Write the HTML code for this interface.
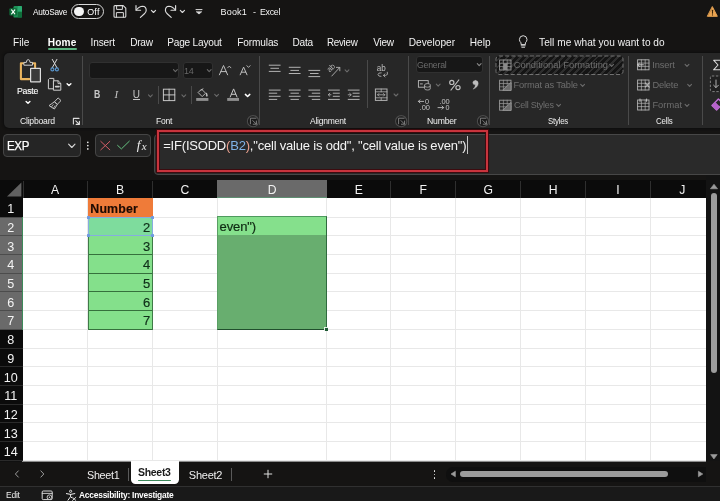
<!DOCTYPE html>
<html lang="en"><head><meta charset="utf-8"><title>Book1 - Excel</title>
<style>
html,body{margin:0;padding:0;}
body{width:720px;height:501px;overflow:hidden;background:#151413;font-family:"Liberation Sans",sans-serif;position:relative;}
#app{position:absolute;left:0;top:0;width:720px;height:501px;overflow:hidden;will-change:transform;}
#app div,#app span,#app svg{position:absolute;display:block;}
#app span{white-space:pre;}
</style></head>
<body>
<div id="app">
<div style="left:3.5px;top:52.5px;width:720px;height:75px;background:#272727;border-radius:5px 0 0 5px;box-shadow:0 0 2px 1px #0e0e0e;"></div>
<div style="left:71px;top:4px;width:32.5px;height:14.5px;border:1.1px solid #d8d8d8;border-radius:8px;box-sizing:border-box;"></div>
<div style="left:74.3px;top:6.6px;width:9.6px;height:9.6px;border-radius:50%;background:#f4f4f4;"></div>
<div style="left:48px;top:48px;width:28.5px;height:1.6px;background:#5cb37f;border-radius:1px;"></div>
<div style="left:81.5px;top:56px;width:1px;height:68.5px;background:#4a4a4a;"></div>
<div style="left:259.0px;top:56px;width:1px;height:68.5px;background:#4a4a4a;"></div>
<div style="left:367.0px;top:60px;width:1px;height:47.5px;background:#4a4a4a;"></div>
<div style="left:408.2px;top:56px;width:1px;height:68.5px;background:#4a4a4a;"></div>
<div style="left:489.0px;top:56px;width:1px;height:68.5px;background:#4a4a4a;"></div>
<div style="left:628.2px;top:56px;width:1px;height:68.5px;background:#4a4a4a;"></div>
<div style="left:702.0px;top:56px;width:1px;height:68.5px;background:#4a4a4a;"></div>
<div style="left:158.0px;top:86px;width:1px;height:18px;background:#4a4a4a;"></div>
<div style="left:191.0px;top:86px;width:1px;height:18px;background:#4a4a4a;"></div>
<div style="left:88.7px;top:61.7px;width:90px;height:17.3px;background:#171717;border-radius:3px;border:1px solid #303030;box-sizing:border-box;"></div>
<div style="left:182.5px;top:61.7px;width:30.5px;height:17.3px;background:#171717;border-radius:3px;border:1px solid #303030;box-sizing:border-box;"></div>
<div style="left:415.7px;top:56px;width:67.5px;height:17.3px;background:#171717;border-radius:3px;border:1px solid #303030;box-sizing:border-box;"></div>
<div style="left:132.5px;top:99.2px;width:7px;height:0.9px;background:#c4c4c4;"></div>
<div style="left:3.2px;top:134px;width:77.6px;height:22.5px;background:#252525;border:1px solid #454545;border-radius:4px;box-sizing:border-box;"></div>
<div style="left:95.4px;top:134px;width:56px;height:22.5px;background:#252525;border:1px solid #454545;border-radius:4px;box-sizing:border-box;"></div>
<div style="left:154px;top:133.5px;width:580px;height:41.5px;background:#2a2a2a;border:1px solid #474747;border-radius:4px;box-sizing:border-box;"></div>
<div style="left:157px;top:129.8px;width:331px;height:41.8px;border:2.9px solid #c9343d;box-sizing:border-box;box-shadow:0 0 0.6px 1px rgba(62,8,12,0.9), inset 0 0 0.6px 1px rgba(62,8,12,0.9);"></div>
<div style="left:0px;top:175px;width:720px;height:5px;background:#151413;"></div>
<div style="left:0px;top:180px;width:706px;height:18px;background:#0b0b0b;"></div>
<div style="left:0px;top:198px;width:23px;height:263px;background:#0b0b0b;"></div>
<div style="left:23px;top:198px;width:683px;height:263px;background:#ffffff;"></div>
<div style="left:87px;top:198px;width:1px;height:263px;background:#e8e8e8;"></div>
<div style="left:152px;top:198px;width:1px;height:263px;background:#e8e8e8;"></div>
<div style="left:217px;top:198px;width:1px;height:263px;background:#e8e8e8;"></div>
<div style="left:326px;top:198px;width:1px;height:263px;background:#e8e8e8;"></div>
<div style="left:390px;top:198px;width:1px;height:263px;background:#e8e8e8;"></div>
<div style="left:455px;top:198px;width:1px;height:263px;background:#e8e8e8;"></div>
<div style="left:520px;top:198px;width:1px;height:263px;background:#e8e8e8;"></div>
<div style="left:585px;top:198px;width:1px;height:263px;background:#e8e8e8;"></div>
<div style="left:650px;top:198px;width:1px;height:263px;background:#e8e8e8;"></div>
<div style="left:23px;top:217px;width:683px;height:1px;background:#e8e8e8;"></div>
<div style="left:23px;top:235px;width:683px;height:1px;background:#e8e8e8;"></div>
<div style="left:23px;top:254px;width:683px;height:1px;background:#e8e8e8;"></div>
<div style="left:23px;top:273px;width:683px;height:1px;background:#e8e8e8;"></div>
<div style="left:23px;top:291px;width:683px;height:1px;background:#e8e8e8;"></div>
<div style="left:23px;top:310px;width:683px;height:1px;background:#e8e8e8;"></div>
<div style="left:23px;top:329px;width:683px;height:1px;background:#e8e8e8;"></div>
<div style="left:23px;top:348px;width:683px;height:1px;background:#e8e8e8;"></div>
<div style="left:23px;top:366px;width:683px;height:1px;background:#e8e8e8;"></div>
<div style="left:23px;top:385px;width:683px;height:1px;background:#e8e8e8;"></div>
<div style="left:23px;top:404px;width:683px;height:1px;background:#e8e8e8;"></div>
<div style="left:23px;top:422px;width:683px;height:1px;background:#e8e8e8;"></div>
<div style="left:23px;top:441px;width:683px;height:1px;background:#e8e8e8;"></div>
<div style="left:23px;top:460px;width:683px;height:1px;background:#e8e8e8;"></div>
<div style="left:23px;top:181px;width:1px;height:17px;background:#2f2f2f;"></div>
<div style="left:87px;top:181px;width:1px;height:17px;background:#2f2f2f;"></div>
<div style="left:152px;top:181px;width:1px;height:17px;background:#2f2f2f;"></div>
<div style="left:217px;top:181px;width:1px;height:17px;background:#2f2f2f;"></div>
<div style="left:326px;top:181px;width:1px;height:17px;background:#2f2f2f;"></div>
<div style="left:390px;top:181px;width:1px;height:17px;background:#2f2f2f;"></div>
<div style="left:455px;top:181px;width:1px;height:17px;background:#2f2f2f;"></div>
<div style="left:520px;top:181px;width:1px;height:17px;background:#2f2f2f;"></div>
<div style="left:585px;top:181px;width:1px;height:17px;background:#2f2f2f;"></div>
<div style="left:650px;top:181px;width:1px;height:17px;background:#2f2f2f;"></div>
<div style="left:217px;top:180px;width:110px;height:18px;background:#6a6a6a;"></div>
<div style="left:217px;top:197px;width:110px;height:1px;background:#5f8f72;"></div>
<div style="left:0px;top:217px;width:23px;height:113px;background:#6a6a6a;"></div>
<div style="left:0px;top:217px;width:23px;height:1px;background:#4c4c4c;"></div>
<div style="left:0px;top:235px;width:23px;height:1px;background:#4c4c4c;"></div>
<div style="left:0px;top:254px;width:23px;height:1px;background:#4c4c4c;"></div>
<div style="left:0px;top:273px;width:23px;height:1px;background:#4c4c4c;"></div>
<div style="left:0px;top:291px;width:23px;height:1px;background:#4c4c4c;"></div>
<div style="left:0px;top:310px;width:23px;height:1px;background:#4c4c4c;"></div>
<div style="left:0px;top:329px;width:23px;height:1px;background:#4c4c4c;"></div>
<div style="left:0px;top:348px;width:23px;height:1px;background:#2a2a2a;"></div>
<div style="left:0px;top:366px;width:23px;height:1px;background:#2a2a2a;"></div>
<div style="left:0px;top:385px;width:23px;height:1px;background:#2a2a2a;"></div>
<div style="left:0px;top:404px;width:23px;height:1px;background:#2a2a2a;"></div>
<div style="left:0px;top:422px;width:23px;height:1px;background:#2a2a2a;"></div>
<div style="left:0px;top:441px;width:23px;height:1px;background:#2a2a2a;"></div>
<div style="left:0px;top:460px;width:23px;height:1px;background:#2a2a2a;"></div>
<div style="left:22px;top:217px;width:1px;height:113px;background:#3d8a5a;"></div>
<svg style="left:0px;top:180px;" width="23" height="18" viewBox="0 0 23 18"><path d="M21.4 2.4V16.4H7Z" fill="#616161"/></svg>
<div style="left:88px;top:198px;width:65px;height:19px;background:#ef7b39;"></div>
<div style="left:88px;top:217px;width:65px;height:113px;background:#84e08b;"></div>
<div style="left:88px;top:235px;width:65px;height:1px;background:#35703c;"></div>
<div style="left:88px;top:254px;width:65px;height:1px;background:#35703c;"></div>
<div style="left:88px;top:273px;width:65px;height:1px;background:#35703c;"></div>
<div style="left:88px;top:291px;width:65px;height:1px;background:#35703c;"></div>
<div style="left:88px;top:310px;width:65px;height:1px;background:#35703c;"></div>
<div style="left:88px;top:329px;width:65px;height:1px;background:#35703c;"></div>
<div style="left:88px;top:217px;width:1px;height:113px;background:#3f7a47;"></div>
<div style="left:152px;top:217px;width:1px;height:113px;background:#3f7a47;"></div>
<div style="left:88px;top:217px;width:65px;height:18px;background:#7edc9d;"></div>
<div style="left:87.7px;top:216.7px;width:65.6px;height:19.6px;border:1.4px solid #86addf;box-sizing:border-box;"></div>
<div style="left:86.80000000000001px;top:215.9px;width:3.2px;height:3.2px;background:#6f9be0;border-radius:0.6px;"></div>
<div style="left:151.0px;top:215.9px;width:3.2px;height:3.2px;background:#6f9be0;border-radius:0.6px;"></div>
<div style="left:86.80000000000001px;top:233.9px;width:3.2px;height:3.2px;background:#6f9be0;border-radius:0.6px;"></div>
<div style="left:151.0px;top:233.9px;width:3.2px;height:3.2px;background:#6f9be0;border-radius:0.6px;"></div>
<div style="left:217px;top:217px;width:110px;height:113px;background:#68ae6f;"></div>
<div style="left:217px;top:217px;width:110px;height:18px;background:#85e08c;"></div>
<div style="left:217px;top:216px;width:110px;height:114px;border-top:1px solid #4e9a5e;border-left:1px solid #5a9f64;border-right:1px solid #2f6a3e;border-bottom:1px solid #214f2d;box-sizing:border-box;"></div>
<div style="left:324px;top:327px;width:4px;height:4px;background:#e8f3ea;"></div>
<div style="left:325px;top:328px;width:3px;height:3px;background:#1f5a35;"></div>
<div style="left:706px;top:175px;width:14px;height:287px;background:#131313;"></div>
<svg style="left:706px;top:180px;" width="14" height="14" viewBox="0 0 14 14"><path d="M8 4.2L11.6 8.8H4.4Z" fill="#9c9c9c" stroke="#9c9c9c" stroke-width="0.6" stroke-linejoin="round"/></svg>
<div style="left:711px;top:192.8px;width:6.2px;height:180.4px;background:#9c9c9c;border-radius:3.1px;"></div>
<svg style="left:706px;top:450px;" width="14" height="12" viewBox="0 0 14 12"><path d="M4.6 4.6H11.2L7.9 9Z" fill="#9c9c9c" stroke="#9c9c9c" stroke-width="0.6" stroke-linejoin="round"/></svg>
<div style="left:0px;top:461px;width:720px;height:25px;background:#151413;"></div>
<div style="left:0px;top:461px;width:706px;height:1px;background:#8c8c8c;"></div>
<div style="left:0px;top:461px;width:22px;height:1px;background:#101010;"></div>
<div style="left:0px;top:486px;width:720px;height:15px;background:#191919;"></div>
<div style="left:0px;top:485.6px;width:720px;height:0.8px;background:#303030;"></div>
<div style="left:131px;top:461px;width:47.5px;height:22.5px;background:#ffffff;border-radius:0 0 4.5px 4.5px;"></div>
<div style="left:138px;top:479.5px;width:32.5px;height:1.5px;background:#3f8a5c;border-radius:1px;"></div>
<div style="left:231.3px;top:467.5px;width:0.9px;height:13.5px;background:#5a5a5a;"></div>
<div style="left:128.3px;top:467.5px;width:0.9px;height:13.5px;background:#5a5a5a;"></div>
<svg style="left:262px;top:468px;" width="12" height="12" viewBox="0 0 12 12"><path d="M6 1.8V10.2M1.8 6H10.2" stroke="#e0e0e0" stroke-width="1" fill="none"/></svg>
<svg style="left:12px;top:468px;" width="10" height="12" viewBox="0 0 10 12"><path d="M6.6 2.6L3.4 6L6.6 9.4" stroke="#9a9a9a" stroke-width="1" fill="none"/></svg>
<svg style="left:37px;top:468px;" width="10" height="12" viewBox="0 0 10 12"><path d="M3.6 2.6L6.8 6L3.6 9.4" stroke="#9a9a9a" stroke-width="1" fill="none"/></svg>
<div style="left:433.6px;top:470.3px;width:1.8px;height:1.8px;background:#f0f0f0;border-radius:50%;"></div>
<div style="left:433.6px;top:473.70000000000005px;width:1.8px;height:1.8px;background:#f0f0f0;border-radius:50%;"></div>
<div style="left:433.6px;top:477.1px;width:1.8px;height:1.8px;background:#f0f0f0;border-radius:50%;"></div>
<div style="left:446px;top:466.5px;width:260px;height:15px;background:#0f0f0f;border-radius:7px 0 0 7px;"></div>
<svg style="left:448px;top:468px;" width="10" height="12" viewBox="0 0 10 12"><path d="M7.4 3.2V8.8L3 6Z" fill="#9c9c9c" stroke="#9c9c9c" stroke-width="0.6" stroke-linejoin="round"/></svg>
<div style="left:460px;top:470.6px;width:208px;height:6.2px;background:#9c9c9c;border-radius:3.1px;"></div>
<svg style="left:695px;top:468px;" width="10" height="12" viewBox="0 0 10 12"><path d="M3.4 3.2V8.8L7.8 6Z" fill="#9c9c9c" stroke="#9c9c9c" stroke-width="0.6" stroke-linejoin="round"/></svg>
<div style="left:496px;top:55.5px;width:127px;height:18.5px;border-radius:3px;box-sizing:border-box;background:repeating-linear-gradient(135deg,#141414 0 2.9px,#2e2e2e 2.9px 4.9px);"></div>
<svg style="left:495px;top:54.5px" width="129" height="20.5" viewBox="0 0 129 20.5"><rect x="1" y="1" width="127" height="18.5" rx="3" fill="none" stroke="#858585" stroke-width="0.8" stroke-dasharray="4 2.2"/></svg>
<svg style="left:0;top:0" width="720" height="501" viewBox="0 0 720 501"><rect x="13.5" y="6" width="8.5" height="11.6" rx="1.2" fill="#1d9158" stroke="none" stroke-width="0" /><rect x="17.7" y="6" width="4.3" height="5.8" rx="1" fill="#2bab70" stroke="none" stroke-width="0" /><rect x="17.7" y="11.8" width="4.3" height="5.8" rx="1" fill="#0f6e3a" stroke="none" stroke-width="0" /><rect x="9.4" y="8.2" width="7.6" height="7.4" rx="1" fill="#0f6e3a" stroke="none" stroke-width="0" /><path d="M11.6 9.9L14.8 13.9M14.8 9.9L11.6 13.9" fill="none" stroke="#ffffff" stroke-width="1.1" stroke-linecap="round" stroke-linejoin="round" /><path d="M114 6.6Q114 5.6 115 5.6H123.2L125.8 8.2V16.3Q125.8 17.3 124.8 17.3H115Q114 17.3 114 16.3Z" fill="none" stroke="#dcdcdc" stroke-width="1.1" stroke-linecap="round" stroke-linejoin="round" /><path d="M116.6 5.8V9.4H122.4V5.8" fill="none" stroke="#dcdcdc" stroke-width="1" stroke-linecap="round" stroke-linejoin="round" /><path d="M116.4 17.2V12.6H123.4V17.2" fill="none" stroke="#dcdcdc" stroke-width="1" stroke-linecap="round" stroke-linejoin="round" /><path d="M136 5.6V10.2H140.6" fill="none" stroke="#dcdcdc" stroke-width="1.15" stroke-linecap="round" stroke-linejoin="round" /><path d="M136.3 10Q139.2 6.2 142.6 6.2Q146.2 6.4 146.2 10.2Q146.2 12.2 144.4 13.8L140.4 17.4" fill="none" stroke="#dcdcdc" stroke-width="1.15" stroke-linecap="round" stroke-linejoin="round" /><path d="M151.40 10.30L153.50 12.50L155.60 10.30" fill="none" stroke="#dcdcdc" stroke-width="1.1" stroke-linecap="round" stroke-linejoin="round" /><path d="M175.6 5.6V10.2H171" fill="none" stroke="#dcdcdc" stroke-width="1.15" stroke-linecap="round" stroke-linejoin="round" /><path d="M175.3 10Q172.4 6.2 169 6.2Q165.4 6.4 165.4 10.2Q165.4 12.2 167.2 13.8L171.2 17.4" fill="none" stroke="#dcdcdc" stroke-width="1.15" stroke-linecap="round" stroke-linejoin="round" /><path d="M180.30 10.30L182.40 12.50L184.50 10.30" fill="none" stroke="#dcdcdc" stroke-width="1.1" stroke-linecap="round" stroke-linejoin="round" /><path d="M196 9.6H202" fill="none" stroke="#dcdcdc" stroke-width="1" stroke-linecap="round" stroke-linejoin="round" /><path d="M196.6 12L199 14L201.4 12Z" fill="#dcdcdc" stroke="#dcdcdc" stroke-width="0.8" stroke-linecap="round" stroke-linejoin="round" /><path d="M712.5 6.9L717.3 16.3H707.7Z" fill="#eaa452" stroke="#eaa452" stroke-width="1" stroke-linecap="round" stroke-linejoin="round" /><path d="M712.5 10.2V13.2" fill="none" stroke="#3a2608" stroke-width="1.1" stroke-linecap="round" stroke-linejoin="round" /><circle cx="712.5" cy="14.9" r="0.6" fill="#3a2608" stroke="none" stroke-width="0"/><path d="M521 44.2V42.8Q519.4 41.4 519.4 39.4Q519.6 35.8 523.2 35.7Q526.8 35.8 527 39.4Q527 41.4 525.4 42.8V44.2Z" fill="none" stroke="#dcdcdc" stroke-width="1" stroke-linecap="round" stroke-linejoin="round" /><path d="M521.2 45.8H525.2M521.8 47.3H524.6" fill="none" stroke="#dcdcdc" stroke-width="0.9" stroke-linecap="round" stroke-linejoin="round" /><path d="M23.6 63.2H20.9V79.1H29.6" fill="none" stroke="#eab55f" stroke-width="2.1" stroke-linecap="round" stroke-linejoin="round" stroke-linecap="butt" stroke-linejoin="miter"/><path d="M32.6 63.2H35.1V67.2" fill="none" stroke="#eab55f" stroke-width="2.1" stroke-linecap="round" stroke-linejoin="round" stroke-linecap="butt" stroke-linejoin="miter"/><path d="M23.9 64.8V62.4H26.4Q26.4 59.6 28.2 59.6Q30 59.6 30 62.4H32.5V64.8Z" fill="#2a2a2a" stroke="#cfcfcf" stroke-width="1" stroke-linecap="round" stroke-linejoin="round" /><rect x="30.6" y="68.4" width="9.8" height="13.4" rx="0.4" fill="#3a3a3a" stroke="#dedede" stroke-width="1.2" /><path d="M26.1 101.5L28 103.3L29.9 101.5" fill="none" stroke="#ffffff" stroke-width="1.4" stroke-linecap="round" stroke-linejoin="round" /><path d="M52.3 59.4L56.9 67.6M56.9 59.4L52.3 67.6" fill="none" stroke="#dcdcdc" stroke-width="1" stroke-linecap="round" stroke-linejoin="round" /><circle cx="52.4" cy="69.4" r="1.5" fill="none" stroke="#5b9bd5" stroke-width="1.1"/><circle cx="56.9" cy="69.4" r="1.5" fill="none" stroke="#5b9bd5" stroke-width="1.1"/><path d="M50 78.4H53.8V88.8H48.4V80Z" fill="none" stroke="#d0d0d0" stroke-width="1" stroke-linecap="round" stroke-linejoin="round" stroke-linejoin="miter"/><path d="M53.8 80.8H58.2L60.8 83.4V90.2H53.8Z" fill="#272727" stroke="#d0d0d0" stroke-width="1" stroke-linecap="round" stroke-linejoin="round" stroke-linejoin="miter"/><path d="M58 81V83.6H60.6" fill="none" stroke="#d0d0d0" stroke-width="0.9" stroke-linecap="round" stroke-linejoin="round" /><path d="M55.6 86.6H59" fill="none" stroke="#d0d0d0" stroke-width="1.6" stroke-linecap="round" stroke-linejoin="round" stroke-linecap="butt"/><path d="M67.1 83.8L69 85.6L70.9 83.8" fill="none" stroke="#ffffff" stroke-width="1.4" stroke-linecap="round" stroke-linejoin="round" /><path d="M58.4 98.2L61 100.6L57.2 104.4L54.8 102Z" fill="none" stroke="#d0d0d0" stroke-width="0.9" stroke-linecap="round" stroke-linejoin="round" /><path d="M54.8 102L57.2 104.6L54.4 109L49.4 105.8Z" fill="none" stroke="#d0d0d0" stroke-width="0.9" stroke-linecap="round" stroke-linejoin="round" /><path d="M51.4 107L53.2 104.6M53.4 108.2L55 105.8" fill="none" stroke="#d0d0d0" stroke-width="0.7" stroke-linecap="round" stroke-linejoin="round" /><path d="M73.4 124.0V118.4H79.0" fill="none" stroke="#dcdcdc" stroke-width="1.1" stroke-linecap="round" stroke-linejoin="round" /><path d="M75.80000000000001 120.80000000000001L79.4 124.4M79.4 121.2V124.4H76.2" fill="none" stroke="#dcdcdc" stroke-width="1.1" stroke-linecap="round" stroke-linejoin="round" /><circle cx="253.0" cy="121.2" r="5.6" fill="#1a1a1a" stroke="#4c4c4c" stroke-width="1.1"/><path d="M250.4 123.8V118.2H256.0" fill="none" stroke="#8a8a8a" stroke-width="0.9" stroke-linecap="round" stroke-linejoin="round" /><path d="M252.8 120.60000000000001L256.4 124.2M256.4 121.0V124.2H253.20000000000002" fill="none" stroke="#8a8a8a" stroke-width="0.9" stroke-linecap="round" stroke-linejoin="round" /><circle cx="401.20000000000005" cy="121.2" r="5.6" fill="#1a1a1a" stroke="#4c4c4c" stroke-width="1.1"/><path d="M398.6 123.8V118.2H404.20000000000005" fill="none" stroke="#8a8a8a" stroke-width="0.9" stroke-linecap="round" stroke-linejoin="round" /><path d="M401.0 120.60000000000001L404.6 124.2M404.6 121.0V124.2H401.40000000000003" fill="none" stroke="#8a8a8a" stroke-width="0.9" stroke-linecap="round" stroke-linejoin="round" /><circle cx="483.0" cy="121.2" r="5.6" fill="#1a1a1a" stroke="#4c4c4c" stroke-width="1.1"/><path d="M480.4 123.8V118.2H486.0" fill="none" stroke="#8a8a8a" stroke-width="0.9" stroke-linecap="round" stroke-linejoin="round" /><path d="M482.79999999999995 120.60000000000001L486.4 124.2M486.4 121.0V124.2H483.2" fill="none" stroke="#8a8a8a" stroke-width="0.9" stroke-linecap="round" stroke-linejoin="round" /><path d="M173.50 69.60L175.40 71.60L177.30 69.60" fill="none" stroke="#6a6a6a" stroke-width="1.1" stroke-linecap="round" stroke-linejoin="round" /><path d="M207.30 69.60L209.20 71.60L211.10 69.60" fill="none" stroke="#6a6a6a" stroke-width="1.1" stroke-linecap="round" stroke-linejoin="round" /><path d="M477.30 63.60L479.20 65.60L481.10 63.60" fill="none" stroke="#8a8a8a" stroke-width="1.1" stroke-linecap="round" stroke-linejoin="round" /><path d="M219.4 74.8L223.5 65.5L227.6 74.8M220.9 71.6H226.1" fill="none" stroke="#bdbdbd" stroke-width="1" stroke-linecap="round" stroke-linejoin="round" /><path d="M227.7 67.8L229.3 66.1L230.9 67.8" fill="none" stroke="#bdbdbd" stroke-width="0.9" stroke-linecap="round" stroke-linejoin="round" /><path d="M240.2 74.8L243.6 67.1L247 74.8M241.5 72.2H245.7" fill="none" stroke="#bdbdbd" stroke-width="1" stroke-linecap="round" stroke-linejoin="round" /><path d="M246.9 65.7L248.5 67.4L250.1 65.7" fill="none" stroke="#bdbdbd" stroke-width="0.9" stroke-linecap="round" stroke-linejoin="round" /><path d="M148.50 94.80L150.40 96.80L152.30 94.80" fill="none" stroke="#6a6a6a" stroke-width="1.1" stroke-linecap="round" stroke-linejoin="round" /><rect x="163.4" y="89.2" width="11.4" height="11.4" rx="0" fill="none" stroke="#c6c6c6" stroke-width="1" /><path d="M169.1 89.2V100.6M163.4 94.9H174.8" fill="none" stroke="#c6c6c6" stroke-width="1" stroke-linecap="round" stroke-linejoin="round" /><path d="M181.90 94.80L183.80 96.80L185.70 94.80" fill="none" stroke="#6a6a6a" stroke-width="1.1" stroke-linecap="round" stroke-linejoin="round" /><path d="M201.8 89.4L205.6 93.2L202.2 96.6L198.4 92.8Z" fill="none" stroke="#c6c6c6" stroke-width="0.9" stroke-linecap="round" stroke-linejoin="round" /><path d="M200.8 90.4L203 88.8" fill="none" stroke="#c6c6c6" stroke-width="0.9" stroke-linecap="round" stroke-linejoin="round" /><path d="M206.6 93.4Q207.9 95.4 206.9 96.4Q205.7 95.6 206.6 93.4Z" fill="#c6c6c6" stroke="#c6c6c6" stroke-width="0.8" stroke-linecap="round" stroke-linejoin="round" /><rect x="196.2" y="98" width="12.2" height="2.9" rx="0" fill="#8f8f8f" stroke="none" stroke-width="0" /><path d="M214.70 94.40L216.60 96.40L218.50 94.40" fill="none" stroke="#6a6a6a" stroke-width="1.1" stroke-linecap="round" stroke-linejoin="round" /><path d="M230.2 97L233.6 88.9L237 97M231.5 94.3H235.7" fill="none" stroke="#c6c6c6" stroke-width="1" stroke-linecap="round" stroke-linejoin="round" /><rect x="227.2" y="98" width="11.8" height="2.9" rx="0" fill="#8f8f8f" stroke="none" stroke-width="0" /><path d="M245.4 94.4L247.6 96.5L249.8 94.4" fill="none" stroke="#ffffff" stroke-width="1.5" stroke-linecap="round" stroke-linejoin="round" /><path d="M269.20 65.2H280.20" fill="none" stroke="#b2b2b2" stroke-width="1" stroke-linecap="round" stroke-linejoin="round" /><path d="M270.80 68.3H278.60" fill="none" stroke="#b2b2b2" stroke-width="1" stroke-linecap="round" stroke-linejoin="round" /><path d="M269.20 71.4H280.20" fill="none" stroke="#b2b2b2" stroke-width="1" stroke-linecap="round" stroke-linejoin="round" /><path d="M289.20 67.3H300.20" fill="none" stroke="#b2b2b2" stroke-width="1" stroke-linecap="round" stroke-linejoin="round" /><path d="M290.80 70.4H298.60" fill="none" stroke="#b2b2b2" stroke-width="1" stroke-linecap="round" stroke-linejoin="round" /><path d="M289.20 73.5H300.20" fill="none" stroke="#b2b2b2" stroke-width="1" stroke-linecap="round" stroke-linejoin="round" /><path d="M308.80 70.4H319.80" fill="none" stroke="#b2b2b2" stroke-width="1" stroke-linecap="round" stroke-linejoin="round" /><path d="M310.40 73.5H318.20" fill="none" stroke="#b2b2b2" stroke-width="1" stroke-linecap="round" stroke-linejoin="round" /><path d="M308.80 76.6H319.80" fill="none" stroke="#b2b2b2" stroke-width="1" stroke-linecap="round" stroke-linejoin="round" /><path d="M269.20 90.1H280.20" fill="none" stroke="#b2b2b2" stroke-width="1" stroke-linecap="round" stroke-linejoin="round" /><path d="M269.20 93.2H276.80" fill="none" stroke="#b2b2b2" stroke-width="1" stroke-linecap="round" stroke-linejoin="round" /><path d="M269.20 96.3H280.20" fill="none" stroke="#b2b2b2" stroke-width="1" stroke-linecap="round" stroke-linejoin="round" /><path d="M269.20 99.4H276.80" fill="none" stroke="#b2b2b2" stroke-width="1" stroke-linecap="round" stroke-linejoin="round" /><path d="M289.20 90.1H300.20" fill="none" stroke="#b2b2b2" stroke-width="1" stroke-linecap="round" stroke-linejoin="round" /><path d="M290.90 93.2H298.50" fill="none" stroke="#b2b2b2" stroke-width="1" stroke-linecap="round" stroke-linejoin="round" /><path d="M289.20 96.3H300.20" fill="none" stroke="#b2b2b2" stroke-width="1" stroke-linecap="round" stroke-linejoin="round" /><path d="M290.90 99.4H298.50" fill="none" stroke="#b2b2b2" stroke-width="1" stroke-linecap="round" stroke-linejoin="round" /><path d="M308.80 90.1H319.80" fill="none" stroke="#b2b2b2" stroke-width="1" stroke-linecap="round" stroke-linejoin="round" /><path d="M312.20 93.2H319.80" fill="none" stroke="#b2b2b2" stroke-width="1" stroke-linecap="round" stroke-linejoin="round" /><path d="M308.80 96.3H319.80" fill="none" stroke="#b2b2b2" stroke-width="1" stroke-linecap="round" stroke-linejoin="round" /><path d="M312.20 99.4H319.80" fill="none" stroke="#b2b2b2" stroke-width="1" stroke-linecap="round" stroke-linejoin="round" /><text x="0" y="0" transform="translate(329.8,72.6) rotate(-45)" font-family="Liberation Sans, sans-serif" font-size="7.8" fill="#b8b8b8" textLength="8.4" lengthAdjust="spacingAndGlyphs">ab</text><path d="M331.8 76L339.6 67.6M339.8 70.8V67.4H336.4" fill="none" stroke="#b2b2b2" stroke-width="0.9" stroke-linecap="round" stroke-linejoin="round" /><path d="M345.10 69.80L347.00 71.80L348.90 69.80" fill="none" stroke="#6a6a6a" stroke-width="1.1" stroke-linecap="round" stroke-linejoin="round" /><path d="M328.40 90.1H339.40" fill="none" stroke="#b2b2b2" stroke-width="1" stroke-linecap="round" stroke-linejoin="round" /><path d="M328.40 99.4H339.40" fill="none" stroke="#b2b2b2" stroke-width="1" stroke-linecap="round" stroke-linejoin="round" /><path d="M333.20 93.2H339.40" fill="none" stroke="#b2b2b2" stroke-width="1" stroke-linecap="round" stroke-linejoin="round" /><path d="M333.20 96.3H339.40" fill="none" stroke="#b2b2b2" stroke-width="1" stroke-linecap="round" stroke-linejoin="round" /><path d="M331 94.75H328.4M329.8 93.25L328.2 94.75L329.8 96.25" fill="none" stroke="#b2b2b2" stroke-width="0.8" stroke-linecap="round" stroke-linejoin="round" /><path d="M348.20 90.1H359.20" fill="none" stroke="#b2b2b2" stroke-width="1" stroke-linecap="round" stroke-linejoin="round" /><path d="M348.20 99.4H359.20" fill="none" stroke="#b2b2b2" stroke-width="1" stroke-linecap="round" stroke-linejoin="round" /><path d="M353.00 93.2H359.20" fill="none" stroke="#b2b2b2" stroke-width="1" stroke-linecap="round" stroke-linejoin="round" /><path d="M353.00 96.3H359.20" fill="none" stroke="#b2b2b2" stroke-width="1" stroke-linecap="round" stroke-linejoin="round" /><path d="M348.2 94.75H351M349.6 93.25L351.2 94.75L349.6 96.25" fill="none" stroke="#b2b2b2" stroke-width="0.8" stroke-linecap="round" stroke-linejoin="round" /><text x="376.8" y="71" font-family="Liberation Sans, sans-serif" font-size="8.4" fill="#c0c0c0" textLength="9" lengthAdjust="spacingAndGlyphs">ab</text><path d="M381.2 72.8Q378 72.6 378 74.6Q378.2 76.6 381 76.4" fill="none" stroke="#b2b2b2" stroke-width="0.85" stroke-linecap="round" stroke-linejoin="round" /><path d="M387.4 72.2Q388.4 75.2 385.6 75.4H383.6M385 73.9L383.4 75.4L385 76.9" fill="none" stroke="#b2b2b2" stroke-width="0.85" stroke-linecap="round" stroke-linejoin="round" /><rect x="375.4" y="89" width="11.6" height="11.4" rx="0" fill="none" stroke="#b2b2b2" stroke-width="1" /><path d="M375.4 91.8H387M375.4 97.8H387M381.2 89V91.8M381.2 97.8V100.4" fill="none" stroke="#b2b2b2" stroke-width="0.8" stroke-linecap="round" stroke-linejoin="round" /><path d="M377.6 94.8H384.8M378.9 93.5L377.6 94.8L378.9 96.1M383.5 93.5L384.8 94.8L383.5 96.1" fill="none" stroke="#b2b2b2" stroke-width="0.8" stroke-linecap="round" stroke-linejoin="round" /><path d="M394.10 94.00L396.00 96.00L397.90 94.00" fill="none" stroke="#6a6a6a" stroke-width="1.1" stroke-linecap="round" stroke-linejoin="round" /><rect x="418.4" y="80.6" width="9.8" height="6.6" rx="0" fill="none" stroke="#bdbdbd" stroke-width="0.9" /><path d="M420.4 83.9H422.4" fill="none" stroke="#bdbdbd" stroke-width="0.9" stroke-linecap="round" stroke-linejoin="round" /><path d="M424.6 84.6Q424.6 83.6 427.4 83.6Q430.2 83.6 430.2 84.6V89Q430.2 90 427.4 90Q424.6 90 424.6 89Z" fill="#272727" stroke="#bdbdbd" stroke-width="0.8" stroke-linecap="round" stroke-linejoin="round" /><path d="M424.6 86.2Q424.6 87.2 427.4 87.2Q430.2 87.2 430.2 86.2" fill="none" stroke="#bdbdbd" stroke-width="0.7" stroke-linecap="round" stroke-linejoin="round" /><path d="M436.30 84.20L438.20 86.20L440.10 84.20" fill="none" stroke="#6a6a6a" stroke-width="1.1" stroke-linecap="round" stroke-linejoin="round" /><circle cx="451.8" cy="82.4" r="2.1" fill="none" stroke="#bdbdbd" stroke-width="1.2"/><circle cx="458" cy="87.6" r="2.1" fill="none" stroke="#bdbdbd" stroke-width="1.2"/><path d="M458.8 80L451 90" fill="none" stroke="#bdbdbd" stroke-width="1.2" stroke-linecap="round" stroke-linejoin="round" /><path d="M475.4 80.4Q478.4 80.4 478.2 83.6Q478 87.4 473 89.2Q475.6 87 475.4 84.8Q472.8 84.8 472.8 82.6Q473 80.4 475.4 80.4Z" fill="#bdbdbd" stroke="#bdbdbd" stroke-width="0.4" stroke-linecap="round" stroke-linejoin="round" /><text x="425" y="104.2" font-family="Liberation Sans, sans-serif" font-size="7.2" fill="#c6c6c6">0</text><text x="419.6" y="110.4" font-family="Liberation Sans, sans-serif" font-size="7.2" fill="#c6c6c6" textLength="10.4" lengthAdjust="spacingAndGlyphs">.00</text><path d="M418.4 101.4H423.6M420 99.8L418.4 101.4L420 103" fill="none" stroke="#bdbdbd" stroke-width="0.9" stroke-linecap="round" stroke-linejoin="round" /><text x="439.4" y="104.2" font-family="Liberation Sans, sans-serif" font-size="7.2" fill="#c6c6c6" textLength="10.4" lengthAdjust="spacingAndGlyphs">.00</text><text x="445.6" y="110.4" font-family="Liberation Sans, sans-serif" font-size="7.2" fill="#c6c6c6">0</text><path d="M438 107.6H443.6M442 106L443.6 107.6L442 109.2" fill="none" stroke="#bdbdbd" stroke-width="0.9" stroke-linecap="round" stroke-linejoin="round" /><rect x="499.6" y="60" width="11.4" height="10" rx="0" fill="none" stroke="#9a9a9a" stroke-width="0.9" /><path d="M499.6 63.3H511.0M499.6 66.6H511.0M503.40000000000003 60V70M507.20000000000005 60V70" fill="none" stroke="#9a9a9a" stroke-width="0.7" stroke-linecap="round" stroke-linejoin="round" /><rect x="503.4" y="63.3" width="3.8" height="6.7" rx="0" fill="#8a8a8a" stroke="none" stroke-width="0" /><rect x="499.6" y="80.2" width="11.4" height="10" rx="0" fill="none" stroke="#9a9a9a" stroke-width="0.9" /><path d="M499.6 83.5H511.0M499.6 86.8H511.0M503.40000000000003 80.2V90.2M507.20000000000005 80.2V90.2" fill="none" stroke="#9a9a9a" stroke-width="0.7" stroke-linecap="round" stroke-linejoin="round" /><path d="M503 90L511 82.4V90Z" fill="#6a6a6a" stroke="#9a9a9a" stroke-width="0.8" stroke-linecap="round" stroke-linejoin="round" /><rect x="499.6" y="100.2" width="11.4" height="10" rx="0" fill="none" stroke="#9a9a9a" stroke-width="0.9" /><path d="M499.6 103.5H511.0M499.6 106.8H511.0M503.40000000000003 100.2V110.2M507.20000000000005 100.2V110.2" fill="none" stroke="#9a9a9a" stroke-width="0.7" stroke-linecap="round" stroke-linejoin="round" /><path d="M503 110L511 102.4V110Z" fill="#6a6a6a" stroke="#9a9a9a" stroke-width="0.8" stroke-linecap="round" stroke-linejoin="round" /><path d="M609.70 64.40L611.60 66.40L613.50 64.40" fill="none" stroke="#6c6c6c" stroke-width="1.1" stroke-linecap="round" stroke-linejoin="round" /><path d="M580.70 84.40L582.60 86.40L584.50 84.40" fill="none" stroke="#6c6c6c" stroke-width="1.1" stroke-linecap="round" stroke-linejoin="round" /><path d="M556.70 104.40L558.60 106.40L560.50 104.40" fill="none" stroke="#6c6c6c" stroke-width="1.1" stroke-linecap="round" stroke-linejoin="round" /><rect x="637.6" y="59.8" width="11.4" height="10" rx="0" fill="none" stroke="#b4b4b4" stroke-width="0.9" /><path d="M637.6 63.099999999999994H649.0M637.6 66.39999999999999H649.0M641.4 59.8V69.8M645.2 59.8V69.8" fill="none" stroke="#b4b4b4" stroke-width="0.7" stroke-linecap="round" stroke-linejoin="round" /><path d="M637.6 64.8H643.4M639.4 63.2L637.6 64.8L639.4 66.4" fill="none" stroke="#d0d0d0" stroke-width="0.9" stroke-linecap="round" stroke-linejoin="round" /><rect x="637.6" y="80" width="11.4" height="10" rx="0" fill="none" stroke="#b4b4b4" stroke-width="0.9" /><path d="M637.6 83.3H649.0M637.6 86.6H649.0M641.4 80V90M645.2 80V90" fill="none" stroke="#b4b4b4" stroke-width="0.7" stroke-linecap="round" stroke-linejoin="round" /><path d="M645.4 83L649.4 87M649.4 83L645.4 87" fill="none" stroke="#d0d0d0" stroke-width="1" stroke-linecap="round" stroke-linejoin="round" /><rect x="637.6" y="100" width="11.4" height="10" rx="0" fill="none" stroke="#b4b4b4" stroke-width="0.9" /><path d="M637.6 103.3H649.0M637.6 106.6H649.0M641.4 100V110M645.2 100V110" fill="none" stroke="#b4b4b4" stroke-width="0.7" stroke-linecap="round" stroke-linejoin="round" /><path d="M640 99V101.4M646.6 99V101.4" fill="none" stroke="#d0d0d0" stroke-width="0.9" stroke-linecap="round" stroke-linejoin="round" /><path d="M685.10 64.40L687.00 66.40L688.90 64.40" fill="none" stroke="#6c6c6c" stroke-width="1.1" stroke-linecap="round" stroke-linejoin="round" /><path d="M687.70 84.40L689.60 86.40L691.50 84.40" fill="none" stroke="#6c6c6c" stroke-width="1.1" stroke-linecap="round" stroke-linejoin="round" /><path d="M685.10 104.40L687.00 106.40L688.90 104.40" fill="none" stroke="#6c6c6c" stroke-width="1.1" stroke-linecap="round" stroke-linejoin="round" /><path d="M721 60.2H713.6L718 65L713.6 69.8H721" fill="none" stroke="#dcdcdc" stroke-width="1.1" stroke-linecap="round" stroke-linejoin="round" /><rect x="710.4" y="76" width="12" height="15.6" rx="1.5" fill="#1f1f1f" stroke="#8a8a8a" stroke-width="0.9" stroke-dasharray="2.4 1.6"/><path d="M716 80V87.4M713.6 85.2L716 87.6L718.4 85.2" fill="none" stroke="#bdbdbd" stroke-width="0.9" stroke-linecap="round" stroke-linejoin="round" /><path d="M712 105.4L718.4 99L723 103.6L716.6 110Z" fill="none" stroke="#c070d2" stroke-width="1.4" stroke-linecap="round" stroke-linejoin="round" /><path d="M712.6 105.6L715.6 102.6L719.4 106.4L716.4 109.4Z" fill="#b862cc" stroke="#b862cc" stroke-width="0.5" stroke-linecap="round" stroke-linejoin="round" /><path d="M68.60 144.10L71.80 147.50L75.00 144.10" fill="none" stroke="#d8d8d8" stroke-width="1.1" stroke-linecap="round" stroke-linejoin="round" /><circle cx="87.8" cy="142.3" r="0.85" fill="#e8e8e8" stroke="none" stroke-width="0"/><circle cx="87.8" cy="145.6" r="0.85" fill="#e8e8e8" stroke="none" stroke-width="0"/><circle cx="87.8" cy="148.9" r="0.85" fill="#e8e8e8" stroke="none" stroke-width="0"/><path d="M100.8 141.4L109.8 149.8M109.8 141.4L100.8 149.8" fill="none" stroke="#d25c66" stroke-width="1" stroke-linecap="round" stroke-linejoin="round" /><path d="M117.6 145.4L121.4 148.9L129.3 141.2" fill="none" stroke="#66c481" stroke-width="1" stroke-linecap="round" stroke-linejoin="round" /><rect x="42.2" y="491" width="10" height="8.6" rx="1" fill="none" stroke="#d8d8d8" stroke-width="1" /><path d="M42.2 493.4H52.2" fill="none" stroke="#d8d8d8" stroke-width="0.9" stroke-linecap="round" stroke-linejoin="round" /><circle cx="49.4" cy="497.2" r="2.3" fill="#191919" stroke="#d8d8d8" stroke-width="0.9"/><circle cx="49.4" cy="497.2" r="0.7" fill="#d8d8d8" stroke="none" stroke-width="0"/><circle cx="70.6" cy="491.3" r="1.1" fill="none" stroke="#ececec" stroke-width="0.9"/><path d="M66.4 493.6L70.6 494.4L74.8 493.6M70.6 494.4V496.6L68 500.2M70.6 496.6L72 498" fill="none" stroke="#ececec" stroke-width="1" stroke-linecap="round" stroke-linejoin="round" /><path d="M72.6 497.4L75.8 500.4M75.8 497.4L72.6 500.4" fill="none" stroke="#ececec" stroke-width="0.9" stroke-linecap="round" stroke-linejoin="round" /></svg>
<div style="left:467px;top:136.2px;width:1px;height:18px;background:#c4c4c4;"></div>
<span style="left:33.30px;top:8px;font-size:8.4px;line-height:8.4px;color:#ffffff;letter-spacing:-0.235px;transform:scaleX(0.9905);transform-origin:0 0;">AutoSave</span>
<span style="left:87.23px;top:8px;font-size:8.9px;line-height:8.9px;color:#ffffff;letter-spacing:0.248px;">Off</span>
<span style="left:220.62px;top:8px;font-size:9px;line-height:9px;color:#f4f4f4;letter-spacing:0.145px;">Book1</span>
<span style="left:253.00px;top:8px;font-size:9px;line-height:9px;color:#f4f4f4;">-</span>
<span style="left:260.04px;top:8px;font-size:9px;line-height:9px;color:#f4f4f4;letter-spacing:-0.252px;transform:scaleX(0.9704);transform-origin:0 0;">Excel</span>
<span style="left:12.99px;top:38px;font-size:10.1px;line-height:10.1px;color:#f2f2f2;">File</span>
<span style="left:47.70px;top:38px;font-size:10.1px;line-height:10.1px;color:#ffffff;font-weight:700;letter-spacing:0.185px;">Home</span>
<span style="left:90.50px;top:38px;font-size:10.1px;line-height:10.1px;color:#f2f2f2;letter-spacing:-0.119px;">Insert</span>
<span style="left:130.29px;top:38px;font-size:10.1px;line-height:10.1px;color:#f2f2f2;letter-spacing:-0.283px;">Draw</span>
<span style="left:167.29px;top:38px;font-size:10.1px;line-height:10.1px;color:#f2f2f2;letter-spacing:-0.207px;">Page Layout</span>
<span style="left:237.29px;top:38px;font-size:10.1px;line-height:10.1px;color:#f2f2f2;letter-spacing:-0.134px;">Formulas</span>
<span style="left:292.49px;top:38px;font-size:10.1px;line-height:10.1px;color:#f2f2f2;letter-spacing:-0.207px;">Data</span>
<span style="left:327.31px;top:38px;font-size:10.1px;line-height:10.1px;color:#f2f2f2;letter-spacing:-0.283px;transform:scaleX(0.9716);transform-origin:0 0;">Review</span>
<span style="left:373.20px;top:38px;font-size:10.1px;line-height:10.1px;color:#f2f2f2;letter-spacing:-0.283px;">View</span>
<span style="left:408.79px;top:38px;font-size:10.1px;line-height:10.1px;color:#f2f2f2;letter-spacing:0.031px;">Developer</span>
<span style="left:469.79px;top:38px;font-size:10.1px;line-height:10.1px;color:#f2f2f2;letter-spacing:0.045px;">Help</span>
<span style="left:539.10px;top:38px;font-size:10.1px;line-height:10.1px;color:#f0f0f0;letter-spacing:0.038px;">Tell me what you want to do</span>
<span style="left:20.41px;top:117px;font-size:9.0px;line-height:9.0px;color:#f0f0f0;letter-spacing:-0.252px;transform:scaleX(0.9613);transform-origin:0 0;">Clipboard</span>
<span style="left:156.15px;top:117px;font-size:9.0px;line-height:9.0px;color:#f0f0f0;letter-spacing:-0.252px;transform:scaleX(0.9501);transform-origin:0 0;">Font</span>
<span style="left:310.00px;top:117px;font-size:9.0px;line-height:9.0px;color:#f0f0f0;letter-spacing:-0.252px;transform:scaleX(0.9486);transform-origin:0 0;">Alignment</span>
<span style="left:427.44px;top:117px;font-size:9.0px;line-height:9.0px;color:#f0f0f0;letter-spacing:-0.252px;transform:scaleX(0.9665);transform-origin:0 0;">Number</span>
<span style="left:548.49px;top:117px;font-size:9.0px;line-height:9.0px;color:#f0f0f0;letter-spacing:-0.252px;transform:scaleX(0.8723);transform-origin:0 0;">Styles</span>
<span style="left:656.43px;top:117px;font-size:9.0px;line-height:9.0px;color:#f0f0f0;letter-spacing:-0.252px;transform:scaleX(0.8796);transform-origin:0 0;">Cells</span>
<span style="left:17.43px;top:87px;font-size:9.2px;line-height:9.2px;color:#ffffff;letter-spacing:-0.258px;transform:scaleX(0.9546);transform-origin:0 0;-webkit-text-stroke:0.1px #fff;">Paste</span>
<span style="left:183.68px;top:67px;font-size:9.3px;line-height:9.3px;color:#686868;letter-spacing:-0.260px;transform:scaleX(0.9710);transform-origin:0 0;">14</span>
<span style="left:416.71px;top:61px;font-size:9.3px;line-height:9.3px;color:#6c6c6c;letter-spacing:-0.260px;transform:scaleX(0.9425);transform-origin:0 0;">General</span>
<span style="left:513.70px;top:61px;font-size:9.3px;line-height:9.3px;color:#6e6e6e;letter-spacing:0.038px;">Conditional Formatting</span>
<span style="left:513.38px;top:81px;font-size:9.3px;line-height:9.3px;color:#6e6e6e;letter-spacing:-0.134px;">Format as Table</span>
<span style="left:513.70px;top:101px;font-size:9.3px;line-height:9.3px;color:#6e6e6e;letter-spacing:-0.260px;transform:scaleX(0.9679);transform-origin:0 0;">Cell Styles</span>
<span style="left:652.25px;top:61px;font-size:9.3px;line-height:9.3px;color:#6e6e6e;letter-spacing:-0.115px;">Insert</span>
<span style="left:652.38px;top:81px;font-size:9.3px;line-height:9.3px;color:#6e6e6e;letter-spacing:-0.178px;">Delete</span>
<span style="left:652.38px;top:101px;font-size:9.3px;line-height:9.3px;color:#6e6e6e;letter-spacing:0.059px;">Format</span>
<span style="left:94.20px;top:90px;font-size:10.4px;line-height:10.4px;color:#c8c8c8;font-weight:700;transform:scaleX(0.84);transform-origin:0 0;">B</span>
<span style="left:114.60px;top:89px;font-size:11px;line-height:11px;color:#c4c4c4;font-style:italic;font-family:'Liberation Serif',serif;">I</span>
<span style="left:132.70px;top:90px;font-size:10px;line-height:10px;color:#c4c4c4;">U</span>
<span style="left:6.67px;top:140px;font-size:12.4px;line-height:12.4px;color:#ffffff;letter-spacing:-0.347px;transform:scaleX(0.9280);transform-origin:0 0;-webkit-text-stroke:0.25px #fff;">EXP</span>
<span style="left:50.20px;top:184px;font-size:12.2px;line-height:12.2px;color:#f2f2f2;width:10px;text-align:center;">A</span>
<span style="left:115.20px;top:184px;font-size:12.2px;line-height:12.2px;color:#f2f2f2;width:10px;text-align:center;">B</span>
<span style="left:180.00px;top:184px;font-size:12.2px;line-height:12.2px;color:#f2f2f2;width:10px;text-align:center;">C</span>
<span style="left:267.10px;top:184px;font-size:12.2px;line-height:12.2px;color:#f2f2f2;width:10px;text-align:center;">D</span>
<span style="left:353.80px;top:184px;font-size:12.2px;line-height:12.2px;color:#f2f2f2;width:10px;text-align:center;">E</span>
<span style="left:418.20px;top:184px;font-size:12.2px;line-height:12.2px;color:#f2f2f2;width:10px;text-align:center;">F</span>
<span style="left:483.20px;top:184px;font-size:12.2px;line-height:12.2px;color:#f2f2f2;width:10px;text-align:center;">G</span>
<span style="left:548.20px;top:184px;font-size:12.2px;line-height:12.2px;color:#f2f2f2;width:10px;text-align:center;">H</span>
<span style="left:612.85px;top:184px;font-size:12.2px;line-height:12.2px;color:#f2f2f2;width:10px;text-align:center;">I</span>
<span style="left:677.25px;top:184px;font-size:12.2px;line-height:12.2px;color:#f2f2f2;width:10px;text-align:center;">J</span>
<span style="left:0.00px;top:203px;font-size:12.6px;line-height:12.6px;color:#f4f4f4;width:21.4px;text-align:center;">1</span>
<span style="left:0.00px;top:222px;font-size:12.6px;line-height:12.6px;color:#f4f4f4;width:21.4px;text-align:center;">2</span>
<span style="left:0.00px;top:241px;font-size:12.6px;line-height:12.6px;color:#f4f4f4;width:21.4px;text-align:center;">3</span>
<span style="left:0.00px;top:259px;font-size:12.6px;line-height:12.6px;color:#f4f4f4;width:21.4px;text-align:center;">4</span>
<span style="left:0.00px;top:278px;font-size:12.6px;line-height:12.6px;color:#f4f4f4;width:21.4px;text-align:center;">5</span>
<span style="left:0.00px;top:297px;font-size:12.6px;line-height:12.6px;color:#f4f4f4;width:21.4px;text-align:center;">6</span>
<span style="left:0.00px;top:315px;font-size:12.6px;line-height:12.6px;color:#f4f4f4;width:21.4px;text-align:center;">7</span>
<span style="left:0.00px;top:334px;font-size:12.6px;line-height:12.6px;color:#f4f4f4;width:21.4px;text-align:center;">8</span>
<span style="left:0.00px;top:353px;font-size:12.6px;line-height:12.6px;color:#f4f4f4;width:21.4px;text-align:center;">9</span>
<span style="left:0.00px;top:372px;font-size:12.6px;line-height:12.6px;color:#f4f4f4;width:21.4px;text-align:center;">10</span>
<span style="left:0.00px;top:390px;font-size:12.6px;line-height:12.6px;color:#f4f4f4;width:21.4px;text-align:center;">11</span>
<span style="left:0.00px;top:409px;font-size:12.6px;line-height:12.6px;color:#f4f4f4;width:21.4px;text-align:center;">12</span>
<span style="left:0.00px;top:428px;font-size:12.6px;line-height:12.6px;color:#f4f4f4;width:21.4px;text-align:center;">13</span>
<span style="left:0.00px;top:446px;font-size:12.6px;line-height:12.6px;color:#f4f4f4;width:21.4px;text-align:center;">14</span>
<span style="left:90.29px;top:203px;font-size:12.4px;line-height:12.4px;color:#1d0a02;font-weight:700;letter-spacing:0.146px;-webkit-text-stroke:0.15px #1d0a02;">Number</span>
<span style="left:143.10px;top:221px;font-size:13px;line-height:13px;color:#10301a;-webkit-text-stroke:0.2px currentColor;">2</span>
<span style="left:143.10px;top:240px;font-size:13px;line-height:13px;color:#10301a;-webkit-text-stroke:0.2px currentColor;">3</span>
<span style="left:143.10px;top:258px;font-size:13px;line-height:13px;color:#10301a;-webkit-text-stroke:0.2px currentColor;">4</span>
<span style="left:143.10px;top:277px;font-size:13px;line-height:13px;color:#10301a;-webkit-text-stroke:0.2px currentColor;">5</span>
<span style="left:143.10px;top:296px;font-size:13px;line-height:13px;color:#10301a;-webkit-text-stroke:0.2px currentColor;">6</span>
<span style="left:143.10px;top:314px;font-size:13px;line-height:13px;color:#10301a;-webkit-text-stroke:0.2px currentColor;">7</span>
<span style="left:219.62px;top:220px;font-size:13px;line-height:13px;color:#0f2a12;letter-spacing:-0.115px;-webkit-text-stroke:0.2px currentColor;">even")</span>
<span style="left:86.80px;top:470px;font-size:11px;line-height:11px;color:#f0f0f0;letter-spacing:-0.308px;transform:scaleX(0.9799);transform-origin:0 0;">Sheet1</span>
<span style="left:137.73px;top:467px;font-size:11px;line-height:11px;color:#1a1a1a;font-weight:700;letter-spacing:-0.308px;transform:scaleX(0.9534);transform-origin:0 0;">Sheet3</span>
<span style="left:188.79px;top:470px;font-size:11px;line-height:11px;color:#f0f0f0;letter-spacing:-0.233px;">Sheet2</span>
<span style="left:5.66px;top:491px;font-size:8.8px;line-height:8.8px;color:#ececec;letter-spacing:-0.246px;transform:scaleX(0.9634);transform-origin:0 0;">Edit</span>
<span style="left:79.23px;top:491px;font-size:9.1px;line-height:9.1px;color:#ffffff;font-weight:700;letter-spacing:-0.255px;transform:scaleX(0.9257);transform-origin:0 0;">Accessibility: Investigate</span>
<span style="left:136.80px;top:138px;font-size:13.4px;line-height:13.4px;color:#ececec;font-style:italic;font-family:'Liberation Serif',serif;">f</span>
<span style="left:141.80px;top:141px;font-size:11px;line-height:11px;color:#ececec;font-style:italic;font-family:'Liberation Serif',serif;">x</span>
<span style="left:163.24px;top:139px;font-size:13px;line-height:13px;color:#f4f4f4;letter-spacing:-0.202px;">=IF(ISODD<b style="font-weight:400;color:#e9a08f">(</b><b style="font-weight:400;color:#7fb2e6">B2</b><b style="font-weight:400;color:#e9a08f">)</b>,"cell value is odd", "cell value is even")</span>
</div>
</body></html>
